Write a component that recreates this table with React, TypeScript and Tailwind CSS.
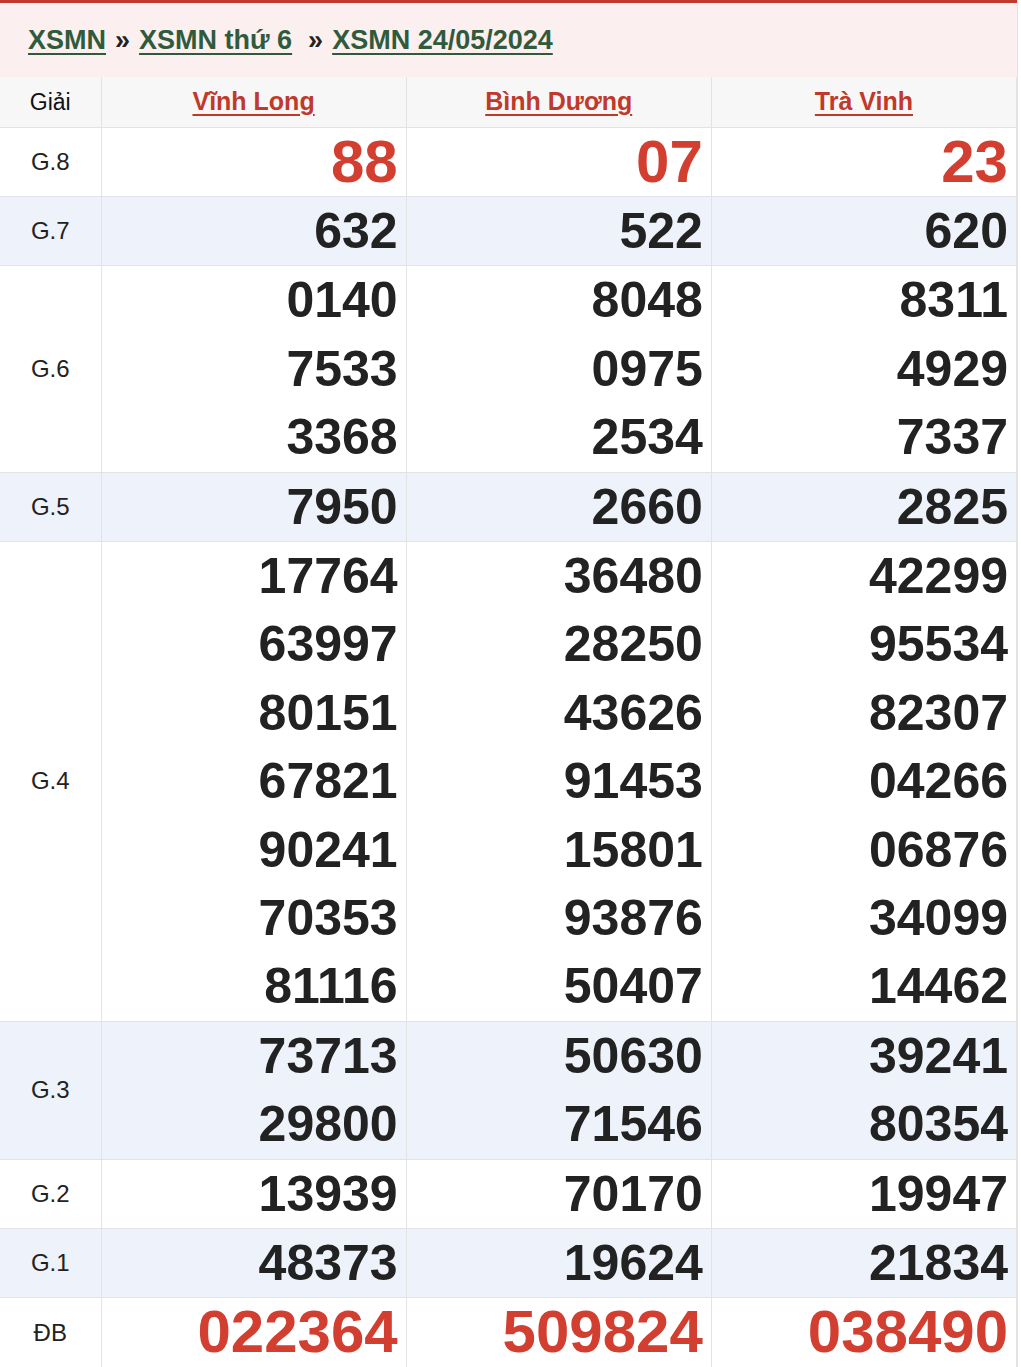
const provinces = ["Vĩnh Long", "Bình Dương", "Trà Vinh"];

type Row = { label: string; values: string[][]; big?: boolean; alt?: boolean };

const rows: Row[] = [
  { label: "G.8", values: [["88"], ["07"], ["23"]], big: true },
  { label: "G.7", values: [["632"], ["522"], ["620"]], alt: true },
  {
    label: "G.6",
    values: [
      ["0140", "7533", "3368"],
      ["8048", "0975", "2534"],
      ["8311", "4929", "7337"],
    ],
  },
  { label: "G.5", values: [["7950"], ["2660"], ["2825"]], alt: true },
  {
    label: "G.4",
    values: [
      ["17764", "63997", "80151", "67821", "90241", "70353", "81116"],
      ["36480", "28250", "43626", "91453", "15801", "93876", "50407"],
      ["42299", "95534", "82307", "04266", "06876", "34099", "14462"],
    ],
  },
  {
    label: "G.3",
    values: [
      ["73713", "29800"],
      ["50630", "71546"],
      ["39241", "80354"],
    ],
    alt: true,
  },
  { label: "G.2", values: [["13939"], ["70170"], ["19947"]] },
  { label: "G.1", values: [["48373"], ["19624"], ["21834"]], alt: true },
  { label: "ĐB", values: [["022364"], ["509824"], ["038490"]], big: true },
];

export default function App() {
  return (
    <div className="w-[1018px] border-r border-[#e3e3e3] bg-white font-['Liberation_Sans',Arial,sans-serif]">
      <div className="flex h-[77px] items-center border-t-[3px] border-[#c0392b] bg-[#fcefef] pl-[28px]">
        <div className="text-[27px] font-bold text-[#2f5b3c]">
          <a href="#" className="underline underline-offset-4">XSMN</a>
          <span className="mx-[9px] text-[#222]">»</span>
          <a href="#" className="underline underline-offset-4">XSMN thứ 6</a>
          <span className="ml-[16px] mr-[9px] text-[#222]">»</span>
          <a href="#" className="underline underline-offset-4">XSMN 24/05/2024</a>
        </div>
      </div>

      <table className="w-full table-fixed border-collapse">
        <colgroup>
          <col className="w-[101px]" />
          <col />
          <col />
          <col />
        </colgroup>
        <thead>
          <tr className="h-[50px] bg-[#f7f7f7]">
            <th className="border border-l-0 border-t-0 border-[#e3e3e3] text-center text-[23px] font-medium text-[#111]">
              Giải
            </th>
            {provinces.map((p) => (
              <th key={p} className="border border-t-0 border-[#e3e3e3] text-center text-[25px] font-bold">
                <a href="#" className="text-[#c0392b] underline underline-offset-4">
                  {p}
                </a>
              </th>
            ))}
          </tr>
        </thead>
        <tbody>
          {rows.map((r) => (
            <tr key={r.label} className={r.alt ? "bg-[#eef3fb]" : "bg-white"}>
              <td className="border border-l-0 border-[#e3e3e3] text-center text-[24px] text-[#222]">
                {r.label}
              </td>
              {r.values.map((vals, i) => (
                <td key={i} className="border border-[#e3e3e3] pr-[8px] text-right">
                  {vals.map((v) => (
                    <div
                      key={v}
                      className={
                        r.big
                          ? "text-[60px] leading-[68.4px] font-bold text-[#d23f31]"
                          : "text-[50px] leading-[68.4px] font-bold text-[#222]"
                      }
                    >
                      {v}
                    </div>
                  ))}
                </td>
              ))}
            </tr>
          ))}
        </tbody>
      </table>
    </div>
  );
}
